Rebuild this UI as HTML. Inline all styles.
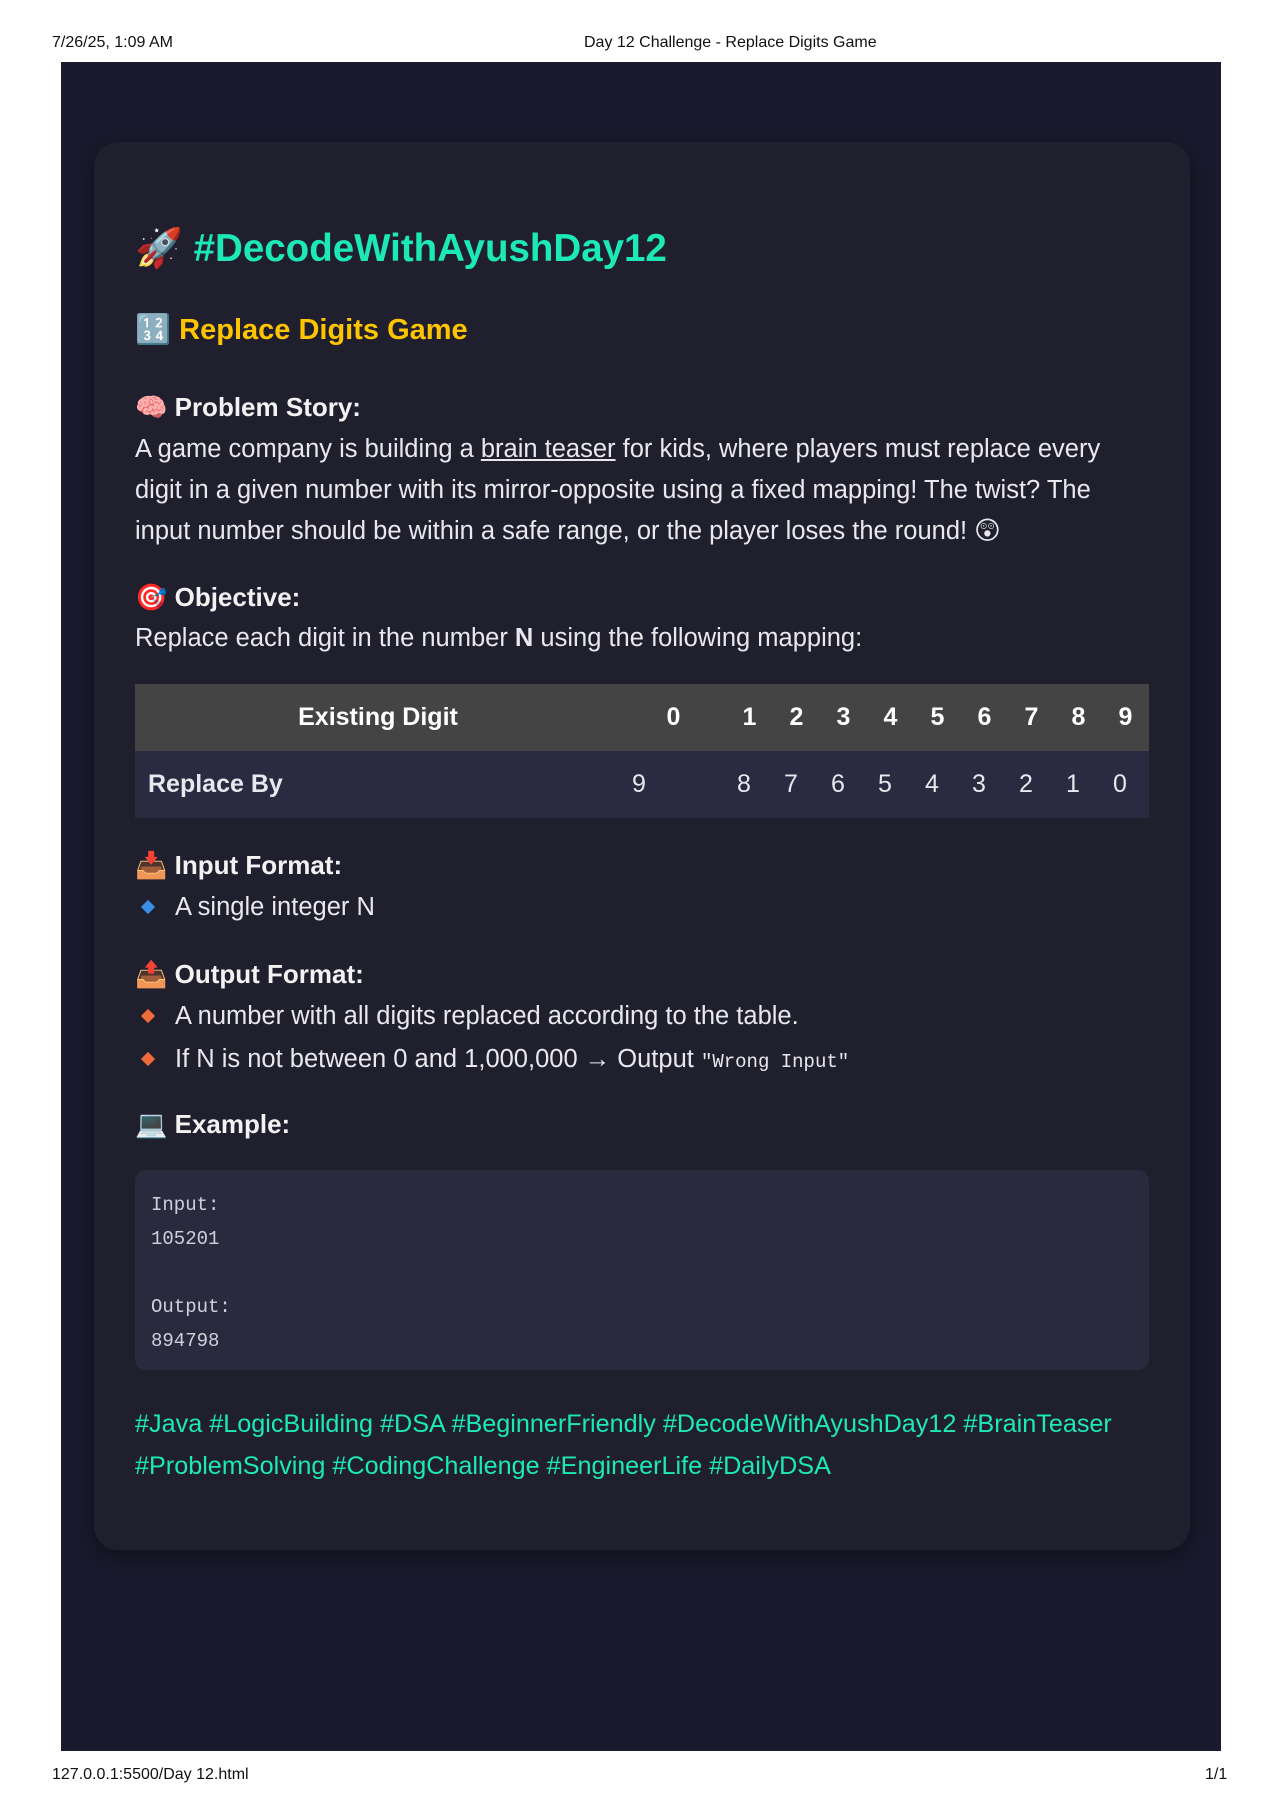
<!DOCTYPE html>
<html><head><meta charset="utf-8">
<style>
*{margin:0;padding:0;box-sizing:border-box}
html,body{width:1280px;height:1811px;background:#fff;overflow:hidden}
body{position:relative;font-family:"Liberation Sans","DejaVu Sans",sans-serif}
.hdr{position:absolute;font-size:16px;color:#111;font-family:"Liberation Sans",sans-serif}
.page{position:absolute;left:61px;top:62px;width:1160px;height:1689px;background:#1a1a2e}
.card{position:absolute;left:94px;top:142px;width:1096px;height:1408px;background:#1f1f2e;border-radius:24px;box-shadow:0 6px 24px rgba(0,0,0,.45)}
.t{position:absolute;left:135px;white-space:nowrap;color:#e8e8ee}
.h1{font-size:38.5px;font-weight:bold;color:#1de9b6;top:226px}
.h2{font-size:29px;font-weight:bold;color:#ffc400;top:313px}
.h3{font-size:26px;font-weight:bold;color:#f2f2f2}
.p{font-size:25.5px;line-height:41px}
table{position:absolute;left:135px;top:684px;width:1014px;border-collapse:collapse;font-size:25px;table-layout:fixed}
th{background:#444;color:#fff;height:67px;text-align:center;font-weight:bold}
td{background:#2a2a40;color:#e8e8ee;height:67px;text-align:left;padding-left:11px}
.code{position:absolute;left:135px;top:1170px;width:1014px;height:200px;background:#2a2a3e;border-radius:11px;font-family:"Liberation Mono","DejaVu Sans Mono",monospace;font-size:19px;color:#cfd0da;padding:18px 16px;line-height:34px;white-space:pre}
.tags{position:absolute;left:135px;top:1403px;font-size:25.2px;line-height:42px;color:#1de9b6;white-space:nowrap}
.dot{display:inline-block;width:10px;height:10px;transform:rotate(45deg);margin:0 22px 3px 5px}
</style></head><body>
<div class="hdr" style="left:52px;top:34px">7/26/25, 1:09 AM</div>
<div class="hdr" style="left:584px;top:34px">Day 12 Challenge - Replace Digits Game</div>
<div class="page"></div>
<div class="card"></div>
<div class="t h1">🚀 #DecodeWithAyushDay12</div>
<div class="t h2">🔢 Replace Digits Game</div>
<div class="t h3" style="top:392px">🧠 Problem Story:</div>
<div class="t p" style="top:429px">A game company is building a <u>brain teaser</u> for kids, where players must replace every<br>digit in a given number with its mirror-opposite using a fixed mapping! The twist? The<br>input number should be within a safe range, or the player loses the round! 😲</div>
<div class="t h3" style="top:582px">🎯 Objective:</div>
<div class="t p" style="top:618px">Replace each digit in the number <b>N</b> using the following mapping:</div>
<table>
<colgroup><col style="width:486px"><col style="width:105px"><col span="9" style="width:47px"></colgroup>
<tr><th>Existing Digit</th><th>0</th><th>1</th><th>2</th><th>3</th><th>4</th><th>5</th><th>6</th><th>7</th><th>8</th><th>9</th></tr>
<tr><td style="font-weight:bold;padding-left:13px">Replace By</td><td>9</td><td>8</td><td>7</td><td>6</td><td>5</td><td>4</td><td>3</td><td>2</td><td>1</td><td>0</td></tr>
</table>
<div class="t h3" style="top:850px">📥 Input Format:</div>
<div class="t p" style="top:887px;left:138px"><span class="dot" style="background:#3a8ee6"></span>A single integer N</div>
<div class="t h3" style="top:959px">📤 Output Format:</div>
<div class="t p" style="top:996px;left:138px"><span class="dot" style="background:#f06b3c"></span>A number with all digits replaced according to the table.</div>
<div class="t p" style="top:1039px;left:138px"><span class="dot" style="background:#f06b3c"></span>If N is not between 0 and 1,000,000 → Output <span style="font-family:'Liberation Mono',monospace;font-size:19px">"Wrong Input"</span></div>
<div class="t h3" style="top:1109px">💻 Example:</div>
<div class="code">Input:
105201

Output:
894798</div>
<div class="tags">#Java #LogicBuilding #DSA #BeginnerFriendly #DecodeWithAyushDay12 #BrainTeaser<br>#ProblemSolving #CodingChallenge #EngineerLife #DailyDSA</div>
<div class="hdr" style="left:52px;top:1766px">127.0.0.1:5500/Day 12.html</div>
<div class="hdr" style="left:1205px;top:1766px">1/1</div>
</body></html>
